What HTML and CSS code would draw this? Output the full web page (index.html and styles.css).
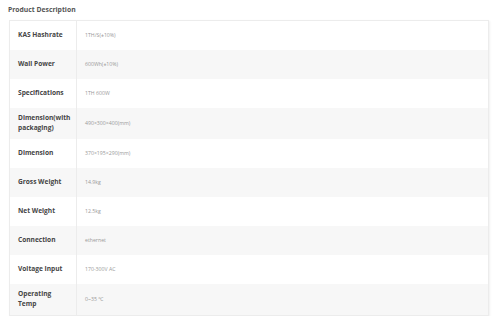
FILE: index.html
```html
<!DOCTYPE html>
<html>
<head>
<meta charset="utf-8">
<link rel="stylesheet" href="styles.css">
</head>
<body>
<div class="wrap">
  <h2 class="title">Product Description</h2>
  <table class="spec">
    <colgroup><col class="c-label"><col class="c-value"></colgroup>
    <tr><th>KAS Hashrate</th><td>1TH/S(±10%)</td></tr>
    <tr><th>Wall Power</th><td>600Wh(±10%)</td></tr>
    <tr><th>Specifications</th><td>1TH 600W</td></tr>
    <tr><th>Dimension(with packaging)</th><td>490×300×400(mm)</td></tr>
    <tr><th>Dimension</th><td>370×195×290(mm)</td></tr>
    <tr><th>Gross Weight</th><td>14.9kg</td></tr>
    <tr><th>Net Weight</th><td>12.5kg</td></tr>
    <tr><th>Connection</th><td>ethernet</td></tr>
    <tr><th>Voltage Input</th><td>170-300V AC</td></tr>
    <tr><th>Operating Temp</th><td>0~35 ℃</td></tr>
  </table>
</div>
</body>
</html>
```
FILE: styles.css
```css
html, body {
  margin: 0;
  padding: 0;
  background: #fff;
}
.wrap {
  padding: 4px 11px 0 9px;
  font-family: "Open Sans", "Noto Sans", sans-serif;
}
.title {
  margin: 0 0 5px -1px;
  font-size: 6.8px;
  line-height: 11px;
  font-weight: 700;
  color: #555;
}
.spec {
  width: 100%;
  table-layout: fixed;
  border-collapse: collapse;
  border: 1px solid #ececec;
  box-shadow: 1px 1px 2px rgba(0,0,0,0.06);
}
.c-label {
  width: 67px;
}
.spec tr {
  height: 29px;
}
.spec tr:nth-child(even) {
  background: #f7f7f7;
}
.spec th {
  padding: 5px 6px 5px 8px;
  text-align: left;
  vertical-align: middle;
  font-size: 6.6px;
  line-height: 10.5px;
  font-weight: 700;
  color: #454545;
  border-right: 1px solid #ececec;
}
.spec td {
  padding: 5px 8px;
  vertical-align: middle;
  font-size: 5.2px;
  line-height: 10px;
  color: #999;
}
```
